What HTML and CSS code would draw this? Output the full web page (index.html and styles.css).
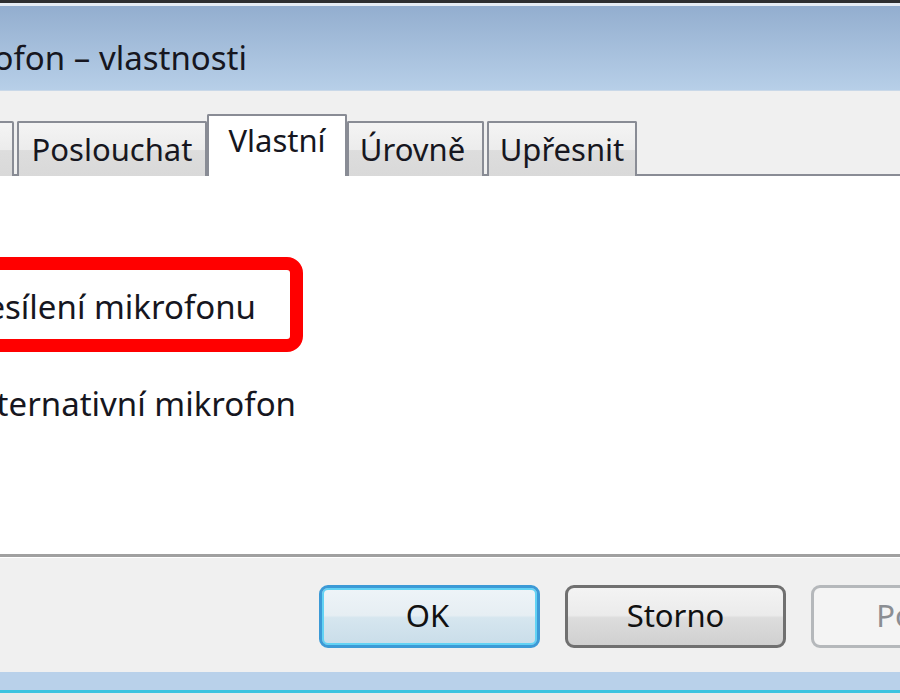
FILE: index.html
```html
<!DOCTYPE html>
<html lang="cs">
<head>
<meta charset="UTF-8" />
<meta name="viewport" content="width=device-width, initial-scale=1" />
<title>Mikrofon – vlastnosti</title>
<link rel="stylesheet" href="styles.css">
</head>
<body>
  <div class="window">
    <div class="frame-top"></div>
    <header class="titlebar">
      <div class="clip title-clip"><span class="title">Mikrofon – vlastnosti</span></div>
    </header>

    <div class="dialog">
      <nav class="tabs" role="tablist">
        <div class="tab tab-cut" role="tab">Obecné</div>
        <div class="tab tab-listen" role="tab">Poslouchat</div>
        <div class="tab tab-active" role="tab" aria-selected="true">Vlastní</div>
        <div class="tab tab-levels" role="tab">Úrovně</div>
        <div class="tab tab-advanced" role="tab">Upřesnit</div>
      </nav>

      <section class="panel" role="tabpanel">
        <div class="highlight">
          <div class="clip boost-clip"><span class="option">Zesílení mikrofonu</span></div>
        </div>
        <div class="clip alt-clip"><span class="option">Alternativní mikrofon</span></div>
      </section>

      <footer class="footer">
        <button class="btn btn-default">OK</button>
        <button class="btn">Storno</button>
        <button class="btn btn-disabled" disabled>Použít</button>
      </footer>
    </div>

    <div class="frame-bottom"></div>
  </div>
</body>
</html>
```

FILE: styles.css
```css
:root {
  --face: #f0f0f0;
  --tab-border: #898c95;
  --text: #161620;
  --frame-blue: #b9d1ea;
}
html, body {
  margin: 0;
  height: 100%;
  overflow: hidden;
  background: #e9e9e9;
}
body {
  font-family: "Noto Sans", "Open Sans", sans-serif;
  font-size: 31px;
  color: var(--text);
}
.window {
  width: 900px;
  overflow: hidden;
}

/* window frame, top edge */
.frame-top {
  height: 3px;
  background: #2e2f31;
  border-bottom: 3px solid #e6edf5;
}
.titlebar {
  height: 84px;
  background: linear-gradient(#93aecf, #b7cfe8);
  border-bottom: 1px solid #c9d8e8;
  display: flex;
  align-items: center;
}

/* right edge of the text is kept, the start runs off the left side */
.clip {
  display: flex;
  justify-content: flex-end;
  white-space: nowrap;
}
.clip > span {
  flex-shrink: 0;
}
.title-clip {
  width: 247px;
  padding-top: 18px;
  font-size: 33px;
}

.dialog {
  background: var(--face);
}

/* tabs */
.tabs {
  display: flex;
  align-items: flex-end;
  height: 85px;
  border-bottom: 2px solid var(--tab-border);
  box-sizing: border-box;
}
.tab {
  box-sizing: border-box;
  height: 55px;
  margin-bottom: -2px;
  margin-right: 3px;
  border: 2px solid var(--tab-border);
  border-bottom: none;
  border-radius: 2px 2px 0 0;
  background: linear-gradient(#f4f4f4 0%, #ececec 50%, #dddddd 52%, #d9d9d9 100%);
  display: flex;
  align-items: center;
  justify-content: center;
  padding-bottom: 2px;
  white-space: nowrap;
  overflow: hidden;
}
.tab-cut {
  width: 60px;
  margin-left: -46px;
  color: transparent;
}
.tab-listen {
  width: 190px;
  margin-right: 0;
}
.tab-active {
  width: 140px;
  height: 62px;
  background: #fff;
  padding-bottom: 12px;
  margin-right: 0;
  position: relative;
  z-index: 1;
}
.tab-levels {
  width: 137px;
  padding-right: 6px;
}
.tab-advanced {
  width: 150px;
}

/* tab page */
.panel {
  background: #fff;
  height: 381px;
  border-bottom: 3px solid #a0a0a0;
  box-shadow: 0 1px 0 #fff;
  box-sizing: border-box;
  padding-top: 81px;
  font-size: 33px;
}
.highlight {
  width: 334px;
  margin-left: -31px;
  height: 95px;
  box-sizing: border-box;
  border: 13px solid #ff0000;
  border-radius: 16px;
  display: flex;
  align-items: center;
}
.boost-clip {
  width: 274px;
  padding-top: 4px;
}
.alt-clip {
  width: 296px;
  margin-top: 29px;
}

/* dialog buttons */
.footer {
  height: 115px;
  display: flex;
  gap: 25px;
  padding: 28px 0 0 319px;
  box-sizing: border-box;
}
.btn {
  flex-shrink: 0;
  width: 221px;
  height: 63px;
  box-sizing: border-box;
  border: 3px solid #707070;
  border-radius: 9px;
  background: linear-gradient(#f3f3f3 0%, #ebebeb 48%, #dddddd 52%, #d0d0d0 100%);
  font: inherit;
  color: #111;
  padding: 0 0 3px;
}
.btn-default {
  border-color: #3c9ad6;
  box-shadow: inset 0 0 0 2px #62d2f4;
  background: linear-gradient(#eef4f8 0%, #e6eef3 48%, #d6e6ef 52%, #c9dde9 100%);
  padding-right: 4px;
}
.btn-disabled {
  border-color: #b5b8bb;
  background: #f4f4f4;
  color: #8b8e93;
}

/* window frame, bottom edge */
.frame-bottom {
  height: 18px;
  background: var(--frame-blue);
  border-bottom: 3px solid #3bc3df;
  box-shadow: 0 3px 0 #1e2b30;
}
```
